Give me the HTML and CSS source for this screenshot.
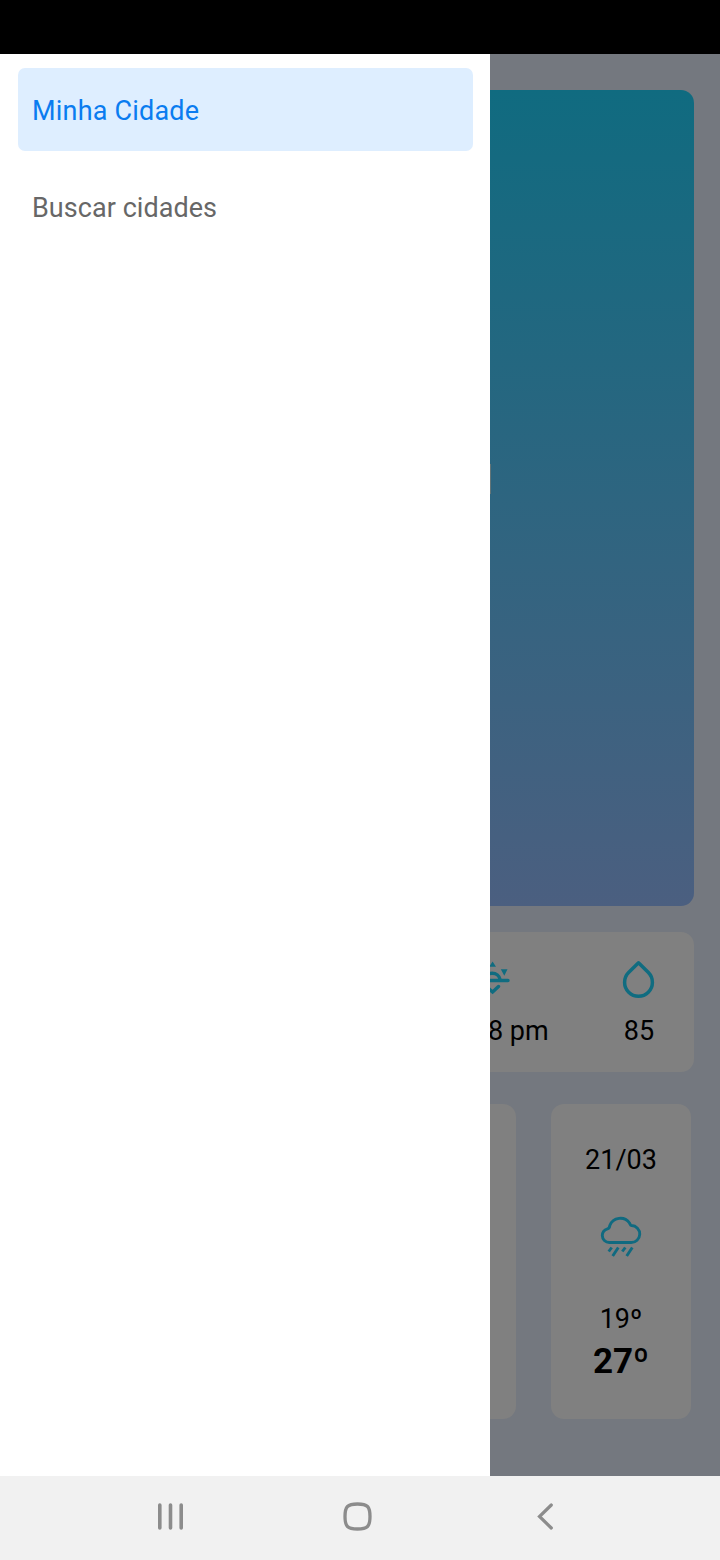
FILE: index.html
```html
<!DOCTYPE html>
<html lang="pt-BR">
<head>
<meta charset="utf-8">
<title>Minha Cidade</title>
<link rel="stylesheet" href="styles.css">
</head>
<body>
<div class="phone">
  <header class="status-bar"></header>
  <div class="screen">
    <nav class="drawer">
      <a class="drawer-item active">Minha Cidade</a>
      <a class="drawer-item">Buscar cidades</a>
    </nav>
    <main class="weather">
      <section class="hero"><span class="hero-edge"></span></section>
      <section class="stats">
        <div class="stat sunset">
          <svg class="icon" width="22" height="40" viewBox="0 0 22 40" fill="none" stroke="#106c80" stroke-width="3.400" stroke-linecap="round">
            <path d="M-16 20.500H18M-6 20A8.300 8.300 0 0 1 10.300 20M-4.500 26L2.600 32L8.500 26.500"/>
            <path d="M-.8 6.700L2.600 1.500L6 6.700ZM10.800 9.300H17.500L14.300 15.800Z" fill="#106c80" stroke="none"/>
          </svg>
          <span class="value">8 pm</span>
        </div>
        <div class="stat humidity">
          <svg class="icon" width="40" height="40" viewBox="0 0 40 40" fill="none" stroke="#106c80" stroke-width="3.500" stroke-linejoin="round">
            <path d="M19.500 2.800L9.600 12.600A13.900 13.900 0 1 0 29.400 12.600Z"/>
          </svg>
          <span class="value">85</span>
        </div>
      </section>
      <section class="forecast">
        <article class="day day-cut"></article>
        <article class="day">
          <span class="date">21/03</span>
          <svg class="rain" width="44" height="44" viewBox="0 0 44 44" fill="none" stroke="#106a80" stroke-width="2.900" stroke-linecap="round" stroke-linejoin="round">
            <path d="M10.300 28.500H32A8.500 8.500 0 0 0 32.500 11.500C31.300 11.300 31 10 30.500 9A11.300 11.300 0 0 0 10.800 11.500C10.600 13.500 10 14.400 8.500 14.800C5 15.900 3.300 18.500 3.300 21.600A7 7 0 0 0 10.300 28.500Z"/>
            <path stroke-linecap="butt" d="M12.700 33.500L9.700 37.500M19.300 33.500L13.700 42M26.300 33.500L23.300 37.500M33.300 33.500L27.700 42"/>
          </svg>
          <span class="low">19º</span>
          <strong class="high">27º</strong>
        </article>
      </section>
    </main>
  </div>
  <footer class="system-nav">
    <svg width="720" height="84" viewBox="0 0 720 84" fill="none" stroke="#8c8c8c" stroke-width="3.600" stroke-linecap="round">
      <path d="M159.800 29V52M170.500 29V52M181.200 29V52"/>
      <path d="M357.500 28C367.500 28 370 30.500 370 40.500S367.500 53 357.500 53S345 50.500 345 40.500S347.500 28 357.500 28Z" stroke-width="3.300"/>
      <path d="M551.300 29L539.500 40.500L551.300 52" stroke-width="3.200"/>
    </svg>
  </footer>
</div>
</body>
</html>
```
FILE: styles.css
```css
* { box-sizing: border-box; }
body { margin: 0; font-family: Roboto, "Liberation Sans", sans-serif; font-size: 27px; }
.phone { width: 720px; height: 1560px; display: grid; grid-template-rows: 54px 1422px 84px; }
.status-bar { background: #000; }
.screen { display: grid; grid-template-columns: 490px 230px; background: #74787f; }
.drawer { background: #fff; padding: 14px 17px 0 18px; display: flex; flex-direction: column; gap: 14px; }
.drawer-item { height: 83px; padding: 3px 14px 0; border-radius: 7px; display: flex; align-items: center; color: #676767; letter-spacing: .05px; }
.drawer-item.active { background: #deeeff; color: #0a7cf0; letter-spacing: .2px; }
.weather { overflow: hidden; padding-top: 36px; display: flex; flex-direction: column; }
.hero { width: 204px; height: 816px; border-radius: 0 13px 13px 0; background: linear-gradient(#106b80, #4b5f80); padding-top: 374px; }
.hero-edge { display: block; width: 1px; height: 30px; background: #637477; }
.stats { width: 204px; height: 140px; margin-top: 26px; border-radius: 0 13px 13px 0; background: #808080; padding-top: 28px; display: flex; justify-content: space-between; }
.stat { display: flex; flex-direction: column; gap: 14px; }
.humidity { align-items: center; width: 110px; }
.icon { display: block; }
.value { line-height: 34px; white-space: nowrap; }
.sunset .value { margin-left: -2px; }
.forecast { display: flex; gap: 35px; margin-top: 32px; }
.day { width: 140px; height: 315px; border-radius: 13px; background: #808080; display: flex; flex-direction: column; align-items: center; padding-top: 39px; flex: none; }
.day-cut { width: 26px; border-radius: 0 13px 13px 0; }
.date { line-height: 34px; }
.rain { margin-top: 37px; }
.low { line-height: 34px; margin-top: 44px; }
.high { font-size: 35px; line-height: 42px; margin-top: 5px; }
.system-nav { background: #f1f1f1; }
.system-nav svg { display: block; }
```
